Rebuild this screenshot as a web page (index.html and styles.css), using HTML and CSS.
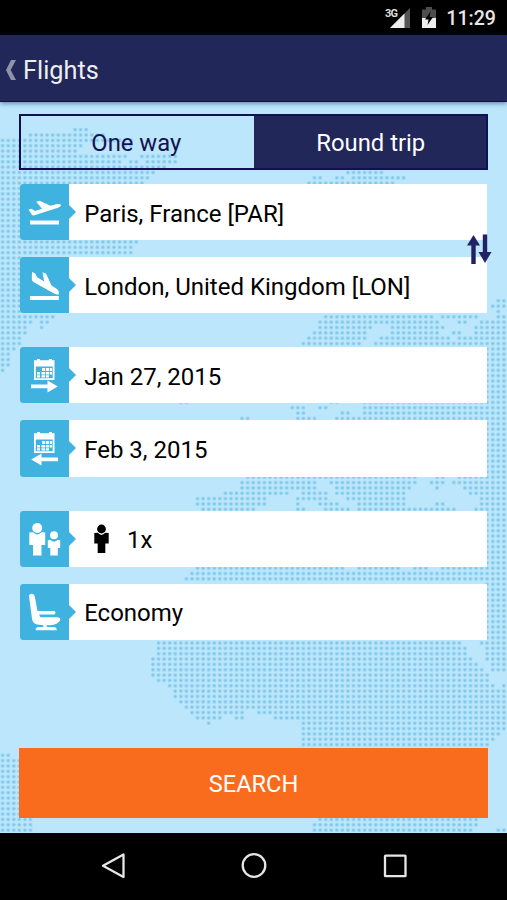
FILE: index.html
```html
<!DOCTYPE html>
<html lang="en">
<head>
    <meta charset="UTF-8">
    <meta name="viewport" content="width=device-width, initial-scale=1.0">
    <title>Flights</title>
    <link rel="stylesheet" href="styles.css">
</head>
<body>
    <!-- Status bar -->
    <div class="status-bar">
        <svg class="signal" width="26" height="22" viewBox="0 0 26 22">
            <path d="M25 1V21H5Z" fill="#555"/>
            <path d="M19.5 6.5V21H5Z" fill="#eee"/>
            <text x="0" y="10" class="network">3G</text>
        </svg>
        <svg class="battery" width="14" height="21" viewBox="0 0 14 21">
            <path d="M0 2.5H4V0H10V2.5H14V11H0Z" fill="#4d4d4d"/>
            <path d="M0 11H14V21H0Z" fill="#eee"/>
            <path d="M8.5 4.5L3 12.5H6.5L5.5 18L11 10H7.5Z" fill="#000"/>
        </svg>
        <span class="clock">11:29</span>
    </div>

    <header class="header">
        <svg class="back" width="10" height="20" viewBox="0 0 10 20">
            <path d="M5 0H10L4.7 10L10 20H5L0 10Z" fill="#9092ac"/>
        </svg>
        <h1>Flights</h1>
    </header>

    <main class="content">
        <!-- Dotted world map, filled by map.js -->
        <svg class="map" width="507" height="731" viewBox="0 102 507 731">
            <defs>
                <pattern id="dots" width="1" height="1" patternUnits="userSpaceOnUse">
                    <rect x="0.18" y="0.18" width="0.64" height="0.64" rx="0.22" fill="#9ad6f3"/>
                    <rect x="0.28" y="0.28" width="0.44" height="0.44" rx="0.12" fill="#80c8eb"/>
                </pattern>
            </defs>
            <path id="land" fill="url(#dots)" transform="translate(-0.185 127.03) scale(5.57 5.347)"/>
        </svg>

        <form class="search-form">
            <div class="tabs">
                <button type="button" class="tab">One way</button>
                <button type="button" class="tab active">Round trip</button>
            </div>

            <div class="group">
                <div class="field">
                    <div class="icon">
                        <svg width="49" height="56" viewBox="0 0 49 56">
                            <path d="M8.5 25.5L11.5 24.8L15.2 27L22 24.7L16.2 17.8L19.5 16.7L30.5 21.8L37 20Q40.5 19.6 41 21.2Q41 22.6 38 23.8L14.5 31.3Q12.5 31.7 11.5 30.2Z"/>
                            <path d="M10 36.5H39V40.5H10Z"/>
                        </svg>
                    </div>
                    <span>Paris, France [PAR]</span>
                </div>
                <div class="field">
                    <div class="icon">
                        <svg width="49" height="56" viewBox="0 0 49 56">
                            <path d="M12 15L15 16.2L17.2 20.2L24.2 24.5L22.5 15.3L26 16.5L31.5 28.5L37 32Q39 33.5 39 37Q37.5 38.2 34.5 36.7L13.5 25Q11.8 24 11.8 22Z"/>
                            <path d="M10 39H38.8V43H10Z"/>
                        </svg>
                    </div>
                    <span>London, United Kingdom [LON]</span>
                </div>
                <svg class="swap" width="25" height="31" viewBox="0 0 25 31">
                    <path d="M6.5 1L13 11.5H8.7V30H4.3V11.5H0Z"/>
                    <path d="M15.8 0.5H20.2V18H24.5L18 29L11.5 18H15.8Z"/>
                </svg>
            </div>

            <div class="group">
                <div class="field">
                    <div class="icon">
                        <svg width="49" height="56" viewBox="0 0 49 56">
                            <path fill-rule="evenodd" d="M14 13.3H17V12H20V13.3H29V12H32V13.3H34.5V33H14ZM15.8 19.5V31.2H32.7V19.5Z"/>
                            <path d="M22 21H25.2V24H22ZM26 21H29V24H26ZM29.7 21H32V24H29.7ZM17 25H20V27.5H17ZM21.5 25H25.2V27.5H21.5ZM26 25H29V27.5H26ZM29.7 25H32V27.5H29.7ZM17 28.2H20V30.5H17ZM21.5 28.2H25.2V30.5H21.5ZM26 28.2H29V30.5H26Z"/>
                            <path d="M11 37.5H27.5V33.5L37.8 39.5L27.5 45.5V41.3H11Z"/>
                        </svg>
                    </div>
                    <span>Jan 27, 2015</span>
                </div>
                <div class="field">
                    <div class="icon">
                        <svg width="49" height="56" viewBox="0 0 49 56">
                            <path fill-rule="evenodd" d="M14 13.3H17V12H20V13.3H29V12H32V13.3H34.5V33H14ZM15.8 19.5V31.2H32.7V19.5Z"/>
                            <path d="M22 21H25.2V24H22ZM26 21H29V24H26ZM29.7 21H32V24H29.7ZM17 25H20V27.5H17ZM21.5 25H25.2V27.5H21.5ZM26 25H29V27.5H26ZM29.7 25H32V27.5H29.7ZM17 28.2H20V30.5H17ZM21.5 28.2H25.2V30.5H21.5ZM26 28.2H29V30.5H26Z"/>
                            <path d="M38 37.5H21.5V33.5L11.2 39.5L21.5 45.5V41.3H38Z"/>
                        </svg>
                    </div>
                    <span>Feb 3, 2015</span>
                </div>
            </div>

            <div class="group">
                <div class="field">
                    <div class="icon">
                        <svg width="49" height="56" viewBox="0 0 49 56">
                            <circle cx="17.2" cy="17" r="5"/>
                            <path d="M9.3 21.5L13 21.3Q17.2 25.5 21.5 21.3L25.2 21.5V34H21.5V44.5H13V34H9.3Z"/>
                            <circle cx="34" cy="24.3" r="4"/>
                            <path d="M27.8 29.3L30.5 29Q34 32.5 37.5 29L40.2 29.3V37H37.8V44.5H30.3V37H27.8Z"/>
                        </svg>
                    </div>
                    <svg class="person" width="15" height="30" viewBox="0 0 15 30">
                        <circle cx="7.5" cy="5" r="4.4"/>
                        <path d="M0.3 9L3.8 8.8Q7.5 13 11.2 8.8L14.7 9V19.5H11.3V29H3.7V19.5H0.3Z"/>
                    </svg>
                    <span>1x</span>
                </div>
                <div class="field">
                    <div class="icon">
                        <svg width="49" height="56" viewBox="0 0 49 56">
                            <path d="M9 12Q9.3 9.5 12 9.7Q14 9.8 14.8 12.5L17.5 27H34.5Q36.5 28.7 34.5 30.5H19L20.5 33.2H37Q40.8 33.5 40.3 36Q38 41 30 41.2H26.7V43H34Q36.7 43.3 36.8 46.3H15.5Q15.5 43.3 18.5 43H23.3V41.2L17 40.5Q13.3 39.5 12.2 36Z"/>
                        </svg>
                    </div>
                    <span>Economy</span>
                </div>
            </div>

            <button type="button" class="search">SEARCH</button>
        </form>
    </main>

    <!-- Navigation bar -->
    <nav class="nav-bar">
        <svg width="28" height="28" viewBox="0 0 28 28">
            <path d="M24.5 2.5V25L4 13.7Z"/>
        </svg>
        <svg width="28" height="28" viewBox="0 0 28 28">
            <circle cx="14" cy="13.5" r="11.3"/>
        </svg>
        <svg width="28" height="28" viewBox="0 0 28 28">
            <rect x="4" y="3.7" width="20.5" height="20.5" rx="0.5"/>
        </svg>
    </nav>

    <script src="map.js"></script>
</body>
</html>
```

FILE: styles.css
```css
* {
    box-sizing: border-box;
}
body {
    margin: 0;
    height: 900px;
    display: flex;
    flex-direction: column;
    font-family: Roboto, "Liberation Sans", sans-serif;
    font-size: 24px;
    color: #000;
    background: #000;
    overflow: hidden;
}
.status-bar {
    height: 35px;
    display: flex;
    justify-content: flex-end;
    align-items: center;
    padding-right: 11px;
    color: #e6e6e6;
}
.signal {
    margin-right: 11px;
}
.network {
    font-size: 11px;
    font-weight: 700;
    letter-spacing: -0.8px;
    fill: #ddd;
}
.battery {
    margin-right: 10px;
}
.clock {
    font-size: 19.6px;
    font-weight: 500;
    line-height: 35px;
    padding-top: 2px;
}
.header {
    position: relative;
    z-index: 1;
    height: 67px;
    display: flex;
    align-items: center;
    gap: 7px;
    padding: 3px 0 0 6px;
    background: #212759;
    border-bottom: 1px solid #10124a;
    box-shadow: 0 1px 5px rgba(20, 40, 80, 0.6);
}
.header h1 {
    margin: 0;
    padding-top: 1px;
    font-size: 25.3px;
    font-weight: 400;
    color: #eee;
}
.content {
    position: relative;
    height: 730.5px;
    background: #bbe6fc;
}
.map {
    position: absolute;
    top: 0;
    left: 0;
}
.search-form {
    position: relative;
    display: flex;
    flex-direction: column;
    padding: 12px 19px 0;
}
.tabs {
    display: flex;
    height: 56px;
    margin-bottom: 14px;
    border: 2px solid #110f56;
}
.tab {
    flex: 1;
    padding: 2px 2px 0 0;
    border: none;
    background: none;
    font: inherit;
    font-size: 23.8px;
    color: #15114f;
}
.tab.active {
    padding: 2px 0 0 2px;
    background: #212759;
    color: #fff;
}
.group {
    position: relative;
    display: flex;
    flex-direction: column;
    gap: 17px;
    margin: 0 1px 33.9px 1px;
}
.field {
    display: flex;
    align-items: center;
    height: 56.2px;
    background: #fff;
    border-radius: 3px 0 0 3px;
}
.field span {
    padding: 2.9px 0 0 15.2px;
}
.icon {
    position: relative;
    width: 49px;
    height: 100%;
    background: #40b2df;
    border-radius: 3px 0 0 3px;
}
.icon::after {
    content: "";
    position: absolute;
    top: 21px;
    left: 49px;
    border-left: 7px solid #40b2df;
    border-top: 7.5px solid transparent;
    border-bottom: 7.5px solid transparent;
}
.icon svg {
    display: block;
    fill: #fff;
}
.person {
    margin-left: 25px;
}
.person + span {
    padding-left: 18px;
}
.swap {
    position: absolute;
    top: 50px;
    left: 447px;
    fill: #212163;
}
.search {
    height: 70px;
    margin-top: 74.3px;
    padding: 2px 0 0;
    border: none;
    background: #fa6c1d;
    font: inherit;
    font-size: 23.6px;
    color: #fff;
}
.nav-bar {
    flex: 1;
    display: flex;
    justify-content: center;
    align-items: center;
    gap: 113px;
}
.nav-bar svg {
    fill: none;
    stroke: #e6e6e6;
    stroke-width: 2.3;
    stroke-linejoin: round;
}
```

FILE: map.js
```javascript
// Each entry: first row, last row, then pairs of first and last column
const land = [
    [0, 0, 13, 15],
    [1, 1, 5, 18],
    [2, 2, 0, 23],
    [3, 3, 0, 14, 22, 23],
    [4, 4, 0, 13],
    [5, 5, 0, 22, 25, 31],
    [6, 6, 0, 21, 23, 24, 26, 31],
    [7, 7, 0, 29],
    [8, 8, 0, 27, 62, 68],
    [9, 9, 0, 26, 56, 57, 60, 61, 63, 72],
    [10, 10, 0, 25, 55, 70],
    [11, 21, 0, 24],
    [22, 23, 0, 23],
    [24, 31, 0, 3],
    [32, 32, 0, 3, 89, 90],
    [33, 33, 0, 3, 88, 90],
    [34, 34, 0, 3, 89, 89],
    [35, 35, 0, 9, 58, 77, 79, 85, 89, 90],
    [36, 36, 0, 5, 7, 8, 57, 78, 82, 83, 86, 90],
    [37, 37, 0, 4, 7, 7, 57, 66, 70, 79, 85, 90],
    [38, 38, 0, 4, 56, 65, 70, 78, 81, 82, 85, 90],
    [39, 39, 0, 3, 55, 65, 68, 80, 82, 90],
    [40, 40, 0, 3, 54, 64, 67, 90],
    [41, 41, 0, 2, 87, 90],
    [42, 44, 0, 1, 87, 90],
    [45, 45, 0, 0, 87, 90],
    [46, 50, 87, 90],
    [51, 51, 32, 33, 59, 60, 65, 90],
    [52, 52, 52, 54, 57, 58, 65, 90],
    [53, 53, 53, 54, 61, 62, 65, 90],
    [54, 54, 43, 44, 53, 56, 60, 90],
    [55, 64, 87, 90],
    [65, 65, 44, 74, 78, 79, 82, 90],
    [66, 66, 43, 56, 59, 74, 77, 79, 81, 90],
    [67, 67, 43, 56, 60, 73, 78, 78, 83, 90],
    [68, 68, 40, 51, 54, 58, 60, 72, 84, 90],
    [69, 69, 35, 47, 53, 58, 62, 72, 86, 90],
    [70, 70, 35, 47, 53, 53, 57, 60, 64, 72, 78, 79, 86, 90],
    [71, 71, 36, 45, 53, 54, 58, 62, 64, 81, 85, 90],
    [72, 81, 87, 90],
    [82, 82, 35, 61, 64, 71, 74, 76, 79, 90],
    [83, 83, 34, 90],
    [84, 84, 33, 90],
    [85, 95, 87, 90],
    [96, 96, 28, 82, 86, 90],
    [97, 98, 28, 83, 87, 90],
    [99, 99, 27, 84, 87, 90],
    [100, 100, 27, 85, 88, 90],
    [101, 101, 27, 86, 88, 90],
    [102, 102, 27, 87],
    [103, 103, 28, 87],
    [104, 104, 30, 88, 90, 90],
    [105, 106, 31, 90],
    [107, 107, 32, 90],
    [108, 108, 33, 90],
    [109, 109, 34, 43, 46, 90],
    [110, 110, 35, 39, 42, 43, 49, 90],
    [111, 111, 37, 37, 54, 90],
    [112, 112, 54, 90],
    [113, 113, 54, 89],
    [114, 114, 54, 88],
    [115, 115, 54, 87],
    [117, 117, 0, 1],
    [118, 128, 0, 3],
    [129, 129, 0, 5, 57, 85],
    [130, 130, 0, 5, 56, 85],
    [131, 131, 0, 5, 56, 84, 89, 90]
];

let path = '';
land.forEach(([top, bottom, ...cols]) => {
    for (let i = 0; i < cols.length; i += 2) {
        path += `M${cols[i]} ${top}H${cols[i + 1] + 1}V${bottom + 1}H${cols[i]}Z`;
    }
});
document.getElementById('land').setAttribute('d', path);
```
